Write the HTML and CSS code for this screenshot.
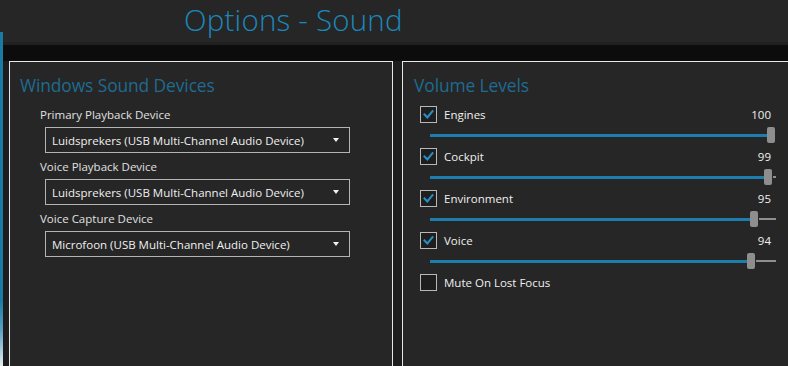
FILE: index.html
```html
<!DOCTYPE html>
<html>
<head>
<meta charset="utf-8">
<link rel="stylesheet" href="styles.css">
</head>
<body>
<div class="app">
  <div class="strip"></div>
  <div class="content">
    <header class="header"><h1 class="title">Options - Sound</h1></header>
    <div class="band"></div>
    <div class="panels">
      <section class="panel panel-left">
        <h2 class="panel-title">Windows Sound Devices</h2>
        <div class="fields">
          <div class="field">
            <div class="field-label">Primary Playback Device</div>
            <div class="select"><span>Luidsprekers (USB Multi-Channel Audio Device)</span><i class="arrow"></i></div>
          </div>
          <div class="field">
            <div class="field-label">Voice Playback Device</div>
            <div class="select"><span>Luidsprekers (USB Multi-Channel Audio Device)</span><i class="arrow"></i></div>
          </div>
          <div class="field">
            <div class="field-label">Voice Capture Device</div>
            <div class="select"><span>Microfoon (USB Multi-Channel Audio Device)</span><i class="arrow"></i></div>
          </div>
        </div>
      </section>
      <section class="panel panel-right">
        <h2 class="panel-title">Volume Levels</h2>
        <div class="levels">
          <div class="level">
            <div class="level-head">
              <span class="check on"><svg viewBox="0 0 17 17"><path d="M4 8.5 L7.2 11.8 L13 4.8"/></svg></span>
              <span class="level-name">Engines</span>
              <span class="level-val">100</span>
            </div>
            <div class="slider"><div class="fill" style="width:337px"></div><div class="thumb"></div><div class="rest"></div></div>
          </div>
          <div class="level">
            <div class="level-head">
              <span class="check on"><svg viewBox="0 0 17 17"><path d="M4 8.5 L7.2 11.8 L13 4.8"/></svg></span>
              <span class="level-name">Cockpit</span>
              <span class="level-val">99</span>
            </div>
            <div class="slider"><div class="fill" style="width:333.6px"></div><div class="thumb"></div><div class="rest"></div></div>
          </div>
          <div class="level">
            <div class="level-head">
              <span class="check on"><svg viewBox="0 0 17 17"><path d="M4 8.5 L7.2 11.8 L13 4.8"/></svg></span>
              <span class="level-name">Environment</span>
              <span class="level-val">95</span>
            </div>
            <div class="slider"><div class="fill" style="width:320.2px"></div><div class="thumb"></div><div class="rest"></div></div>
          </div>
          <div class="level">
            <div class="level-head">
              <span class="check on"><svg viewBox="0 0 17 17"><path d="M4 8.5 L7.2 11.8 L13 4.8"/></svg></span>
              <span class="level-name">Voice</span>
              <span class="level-val">94</span>
            </div>
            <div class="slider"><div class="fill" style="width:316.8px"></div><div class="thumb"></div><div class="rest"></div></div>
          </div>
          <div class="level">
            <div class="level-head">
              <span class="check"></span>
              <span class="level-name">Mute On Lost Focus</span>
            </div>
          </div>
        </div>
      </section>
    </div>
  </div>
</div>
</body>
</html>
```

FILE: styles.css
```css
* { box-sizing: border-box; margin: 0; padding: 0; }
html, body { width: 788px; height: 366px; overflow: hidden; background: #1d1d1d; }
body { font-family: "Open Sans", "Noto Sans", sans-serif; color: #e6e6e6; }

.app { display: flex; height: 366px; }
.strip {
  width: 3px; flex: none;
  background: linear-gradient(to bottom, #262626 0, #262626 32px, #1a7aa3 32px, #1a7aa3 300px, #5aa0c0 330px, #e8eef2 366px);
}
.content { flex: 1; display: flex; flex-direction: column; min-width: 0; }

.header { height: 45px; background: #262626; border-bottom: 3px solid #202020; padding-left: 181px; }
.title {
  font-family: "Open Sans", sans-serif; font-weight: 300; font-size: 29.5px;
  color: #1b88bb; line-height: 40px; letter-spacing: 0.2px;
}
.band { height: 16px; background: #0c0c0c; flex: none; }

.panels { display: flex; gap: 9px; padding-left: 6px; flex: 1; }
.panel { background: #262626; border: 1px solid #e8e8e8; border-bottom: none; flex: none; }
.panel-left { width: 384px; padding: 12px 0 0 10px; }
.panel-right { width: 400px; padding: 12px 0 0 11px; }
.panel-title {
  font-weight: 400; font-size: 17.4px; color: #1f6b91; line-height: 22px; letter-spacing: -0.1px;
}

.fields { margin-top: 10px; padding-left: 20px; }
.field-label { font-size: 11.5px; line-height: 17px; height: 17px; color: #e0e0e0; }
.select {
  margin: 4px 0 5px 5px; width: 305px; height: 26px;
  border: 1px solid #b4b4b4; display: flex; align-items: center;
  padding-left: 6px; font-size: 11.5px; color: #f0f0f0;
}
.select span { flex: 1; }
.arrow {
  width: 0; height: 0; margin-right: 10px;
  border-left: 3.5px solid transparent; border-right: 3.5px solid transparent;
  border-top: 4px solid #f2f2f2;
}

.levels { margin-top: 10px; padding-left: 6px; }
.level { height: 42px; }
.level-head { display: flex; align-items: center; height: 17px; width: 352px; }
.check {
  width: 17px; height: 17px; border: 1px solid #b8b8b8; background: #1e1e1e; flex: none;
  display: flex; align-items: center; justify-content: center;
}
.check svg { width: 17px; height: 17px; }
.check svg path { fill: none; stroke: #2a8dc4; stroke-width: 2.4; stroke-linecap: square; }
.level-name { margin-left: 7px; font-size: 11.5px; color: #f0f0f0; flex: 1; line-height: 17px; }
.level-val { font-size: 11.5px; color: #f0f0f0; line-height: 17px; padding-right: 1px; }

.slider { display: flex; align-items: center; margin-left: 10px; width: 346px; height: 16px; margin-top: 4px; }
.fill { height: 3px; background: #1b7eae; flex: none; }
.thumb { width: 8px; height: 16px; background: #8e8e8e; border-radius: 2px; flex: none; }
.rest { flex: 1; height: 2px; background: #8e8e8e; margin-left: 1px; }
```
